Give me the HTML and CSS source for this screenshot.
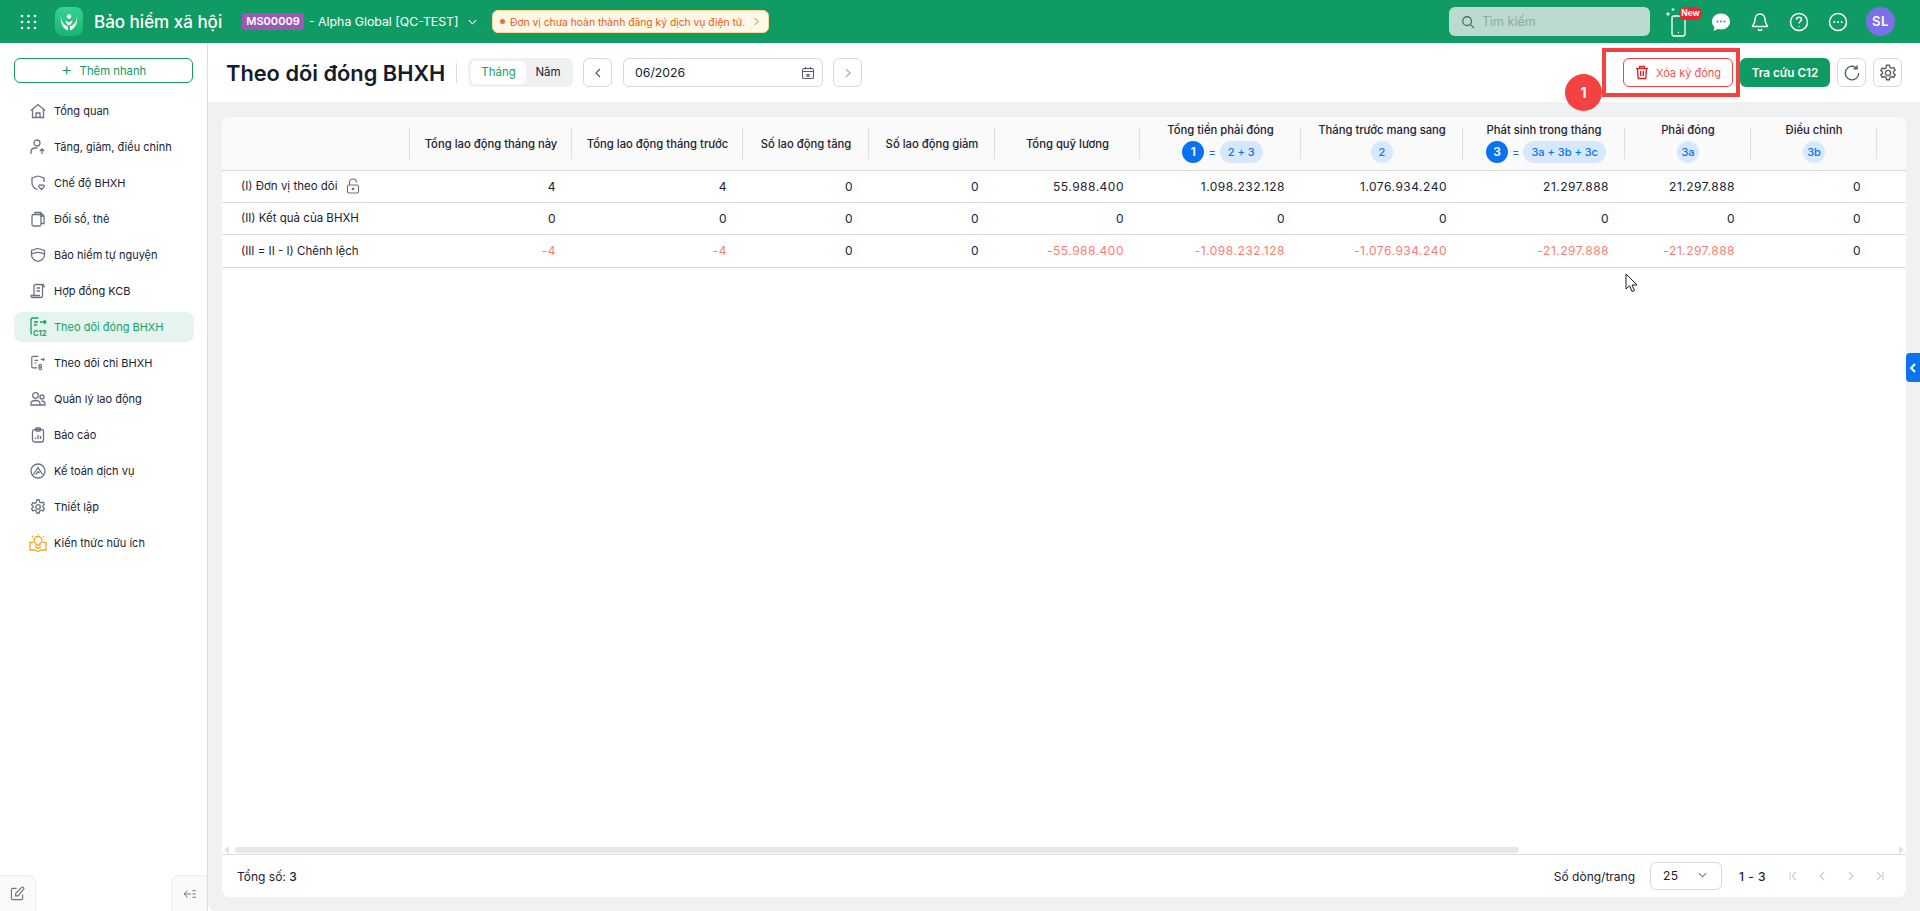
FILE: index.html
```html
<!DOCTYPE html>
<html lang="vi">
<head>
  <meta charset="UTF-8" />
  <meta name="viewport" content="width=device-width, initial-scale=1.0"/>
  <title>Theo dõi đóng BHXH</title>
  <link rel="stylesheet" href="styles.css">
</head>
<body>

  <header class="topbar">
    <svg class="apps-icon" viewBox="0 0 17 16" fill="#fff"><circle cx="2" cy="2" r="1.3"/><circle cx="8.5" cy="2" r="1.3"/><circle cx="15" cy="2" r="1.3"/><circle cx="2" cy="8" r="1.3"/><circle cx="8.5" cy="8" r="1.3"/><circle cx="15" cy="8" r="1.3"/><circle cx="2" cy="14" r="1.3"/><circle cx="8.5" cy="14" r="1.3"/><circle cx="15" cy="14" r="1.3"/></svg>
    <div class="logo">
      <svg viewBox="0 0 20 20" fill="#fff"><circle cx="10" cy="4.500" r="2.300"/><path d="M2 3.500c0 6 3 9.500 7 11v4C4 17 1 11 2 3.500zM18 3.500c0 6-3 9.500-7 11v4c5-1.500 8-7.500 7-15z"/><path d="M6.500 7.500c1 2 2.300 2.700 3.500 2.700s2.500-.7 3.500-2.700c0 3.500-1.700 5.300-3.500 6-1.800-.7-3.500-2.500-3.500-6z"/></svg>
    </div>
    <div class="app-name">Bảo hiểm xã hội</div>
    <span class="org-code">MS00009</span>
    <span class="org-name">- Alpha Global [QC-TEST]</span>
    <svg class="org-caret" viewBox="0 0 10 6" fill="none" stroke="#fff" stroke-width="1.200"><path d="M1 1l4 4 4-4"/></svg>
    <div class="notice">
      <span class="notice-dot"></span>
      <span>Đơn vị chưa hoàn thành đăng ký dịch vụ điện tử.</span>
      <svg viewBox="0 0 6 10" fill="none" stroke="#e0641a" stroke-width="1.200"><path d="M1 1l4 4-4 4"/></svg>
    </div>

    <div class="top-right">
      <div class="search">
        <svg viewBox="0 0 16 16" fill="none" stroke="#4d6b60" stroke-width="1.500"><circle cx="7" cy="7" r="5"/><path d="M11 11l4 4"/></svg>
        <span>Tìm kiếm</span>
      </div>
      <div class="phone">
        <svg viewBox="0 0 24 30" fill="none" stroke="#fff" stroke-width="1.300"><rect x="8" y="9" width="13" height="20" rx="2"/><path d="M14 25.500h1"/><path d="M4 5v4M2 7h4M9 1v3M7.500 2.500h3" stroke-width="1"/></svg>
        <span class="new-badge">New</span>
      </div>
      <svg class="top-icon" viewBox="0 0 20 20"><path fill="#fff" d="M10 1.500c5 0 9 3.500 9 8s-4 8-9 8c-1 0-2-.1-3-.4L2.500 19l1-3.700C2 13.800 1 11.800 1 9.500c0-4.500 4-8 9-8z"/><g fill="#3d6ff0"><circle cx="6.500" cy="9.500" r="1"/><circle cx="10" cy="9.500" r="1"/><circle cx="13.500" cy="9.500" r="1"/></g></svg>
      <svg class="top-icon" viewBox="0 0 20 20" fill="none" stroke="#fff" stroke-width="1.500"><path d="M10 2c-3.200 0-5 2.500-5 5.500 0 4-2.500 6-2.500 7h15c0-1-2.500-3-2.500-7C15 4.500 13.200 2 10 2z"/><path d="M8 17c.4 1 1.100 1.500 2 1.500s1.600-.5 2-1.500"/></svg>
      <svg class="top-icon" viewBox="0 0 20 20" fill="none" stroke="#fff" stroke-width="1.500"><circle cx="10" cy="10" r="8.500"/><path d="M7.500 7.800c0-1.500 1.100-2.500 2.500-2.500s2.500 1 2.500 2.300c0 1.900-2.500 2-2.500 4"/><path d="M10 14v.8"/></svg>
      <svg class="top-icon" viewBox="0 0 20 20" fill="none" stroke="#fff" stroke-width="1.500"><circle cx="10" cy="10" r="8.500"/><g fill="#fff" stroke="none"><circle cx="6.300" cy="10" r="1"/><circle cx="10" cy="10" r="1"/><circle cx="13.700" cy="10" r="1"/></g></svg>
      <div class="avatar">SL</div>
    </div>
  </header>

  <div class="layout">
    <aside class="sidebar">
      <button class="quick-add"><span class="plus">+</span> Thêm nhanh</button>
      <nav class="menu">
        <a class="menu-item">
          <svg viewBox="0 0 16 16"><path d="M1 7.500L8 1.500l7 6M2.500 6.500v8h11v-8M6 14.500V10h4v4.500"/></svg>
          Tổng quan
        </a>
        <a class="menu-item">
          <svg viewBox="0 0 16 16"><circle cx="7" cy="4" r="3"/><path d="M1 15v-2c0-2.500 2-4 4.500-4h2M12 15v-5M9.800 12L12 9.800 14.200 12"/></svg>
          Tăng, giảm, điều chỉnh
        </a>
        <a class="menu-item">
          <svg viewBox="0 0 16 16"><path d="M8 1l6 2v4M8 1L2 3v5c0 3 2.500 5.500 5.500 6.500"/><path d="M11.500 14.500l-2.600-2.600c-1-1.300.9-2.800 2.600-1.300 1.700-1.500 3.600 0 2.600 1.300z"/></svg>
          Chế độ BHXH
        </a>
        <a class="menu-item">
          <svg viewBox="0 0 16 16"><path d="M5 3V1.500h5.500l3.500 3.500v7.500h-3M10.500 1.500V5H14"/><rect x="2" y="3.500" width="9" height="11.500" rx="1.500"/></svg>
          Đối sổ, thẻ
        </a>
        <a class="menu-item">
          <svg viewBox="0 0 16 16"><path d="M8 1.500l6.500 2v4c0 3.500-3 6-6.500 7-3.500-1-6.500-3.500-6.500-7v-4z"/><path d="M1.500 7c4-2 9-2 13 0"/></svg>
          Bảo hiểm tự nguyện
        </a>
        <a class="menu-item">
          <svg viewBox="0 0 16 16"><path d="M4 12.500V3c0-1 .7-1.500 1.500-1.500h7c.8 0 1.500.5 1.500 1.500v1.500M12.500 1.500V12.500c0 1.500-.8 2-1.700 2H2.500C1.500 14.500 1 13.500 1 12.500h9"/><path d="M6.500 5h3.500M6.500 8h3.500"/></svg>
          Hợp đồng KCB
        </a>
        <a class="menu-item active">
          <svg viewBox="0 0 19 20"><path d="M9.500 1h-6C2.500 1 2 1.500 2 2.500v13c0 1 .5 1.500 1 1.500M5 5h4M5 8h3M11 5h6M15 3l2 2-2 2"/><text x="4" y="18.500" class="icon-c12">C12</text></svg>
          Theo dõi đóng BHXH
        </a>
        <a class="menu-item">
          <svg viewBox="0 0 18 18"><path d="M9.500 1.500h-6C2.500 1.500 2 2 2 3v10c0 1 .5 1.500 1.500 1.500H8M5 6h4M5 9h2.500M12 5h4M14.500 3.500L16 5l-1.500 1.500"/><circle cx="11.500" cy="12" r="1.500"/><circle cx="11.500" cy="15" r="1.500"/></svg>
          Theo dõi chi BHXH
        </a>
        <a class="menu-item">
          <svg viewBox="0 0 16 16"><circle cx="5.500" cy="4.500" r="2.800"/><circle cx="12" cy="6" r="2"/><path d="M1 14v-1.500C1 10.500 2.800 9.500 5.500 9.500s4.500 1 4.500 3V14zM11.500 10c2 0 3.500 1 3.500 2.500V14h-5"/></svg>
          Quản lý lao động
        </a>
        <a class="menu-item">
          <svg viewBox="0 0 16 16"><rect x="2.500" y="2.500" width="11" height="12.500" rx="2"/><rect x="5.500" y="1" width="5" height="3" rx="1"/><path d="M5.500 12v-1.500M8 12V8M10.500 12v-3"/></svg>
          Báo cáo
        </a>
        <a class="menu-item">
          <svg viewBox="0 0 16 16"><circle cx="8" cy="8" r="7"/><path d="M3.500 11.500L8 4.500l4.500 7M6 11.500l2.200-3 1.300 1.500"/></svg>
          Kế toán dịch vụ
        </a>
        <a class="menu-item">
          <svg viewBox="0 0 16 16"><circle cx="8" cy="8" r="2.300"/><path d="M6.700 1h2.600l.4 2 1.500.8 1.900-.7 1.300 2.300-1.500 1.300v1.600l1.500 1.300-1.300 2.300-1.900-.7-1.500.8-.4 2H6.700l-.4-2-1.500-.8-1.900.7-1.300-2.300 1.500-1.300V7.200L1.600 5.900l1.300-2.300 1.900.7 1.500-.8z"/></svg>
          Thiết lập
        </a>
        <a class="menu-item tips">
          <svg viewBox="0 0 18 18"><path d="M4 8.500H1V16h5l3 1.500 3-1.500h5V8.500h-3M6 13c1 0 2 .5 3 1.500 1-1 2-1.500 3-1.500"/><path d="M7 11V9.500C5.500 8.500 5 7.500 5 6.500a4 4 0 0 1 8 0c0 1-.5 2-2 3V11z"/><path d="M9 0v1M3 2l1 1M15 2l-1 1"/></svg>
          Kiến thức hữu ích
        </a>
      </nav>
      <div class="side-bottom">
        <button class="side-btn edit-btn">
          <svg viewBox="0 0 16 16"><path d="M7 2.500H3c-1 0-1.500.5-1.500 1.500v9c0 1 .5 1.500 1.500 1.500h9c1 0 1.500-.5 1.500-1.500V9"/><path d="M6 10.500V8l6.500-6.500c.5-.5 1-.5 1.500 0l.5.5c.5.5.5 1 0 1.500L8.500 10.500z"/></svg>
        </button>
        <button class="side-btn collapse-btn">
          <svg viewBox="0 0 16 12"><path d="M5 2L1 6l4 4M1 6h8M11 2h4M11 6h4M11 10h4"/></svg>
        </button>
      </div>
    </aside>

    <main class="main">
      <div class="toolbar">
        <h1>Theo dõi đóng BHXH</h1>
        <span class="title-sep"></span>
        <div class="segment">
          <span class="seg-item on">Tháng</span>
          <span class="seg-item">Năm</span>
        </div>
        <button class="icon-btn">
          <svg viewBox="0 0 8 12" class="chev"><path d="M6 2L2 6l4 4"/></svg>
        </button>
        <div class="date-input">
          <span>06/2026</span>
          <svg viewBox="0 0 14 14"><rect x="1.500" y="2.500" width="11" height="10" rx="1.500"/><path d="M1.500 5.500h11M4.500 1v2.500M9.500 1v2.500M6 8.500h2v2H6z"/></svg>
        </div>
        <button class="icon-btn muted">
          <svg viewBox="0 0 8 12" class="chev"><path d="M2 2l4 4-4 4"/></svg>
        </button>

        <div class="toolbar-right">
          <button class="btn-danger">
            <svg viewBox="0 0 14 15"><path d="M1 3.500h12M4.700 3.500V1.500h4.600v2M2.500 3.500l.7 10h7.600l.7-10M5.700 6v5M8.300 6v5"/></svg>
            Xóa kỳ đóng
          </button>
          <button class="btn-primary">Tra cứu C12</button>
          <button class="icon-btn">
            <svg viewBox="0 0 16 16" class="tool-icon"><path d="M14 8A6 6 0 1 1 11.800 3.400M12.500 1v3.200H9.300"/></svg>
          </button>
          <button class="icon-btn">
            <svg viewBox="0 0 16 16" class="tool-icon"><circle cx="8" cy="8" r="2.300"/><path d="M6.700 1h2.600l.4 2 1.500.8 1.900-.7 1.300 2.300-1.500 1.300v1.600l1.500 1.300-1.300 2.300-1.900-.7-1.500.8-.4 2H6.700l-.4-2-1.500-.8-1.900.7-1.300-2.300 1.500-1.300V7.200L1.600 5.900l1.300-2.300 1.900.7 1.500-.8z"/></svg>
          </button>
        </div>
      </div>

      <div class="content">
        <div class="card">
          <div class="table-wrap">
            <table class="grid">
              <colgroup>
                <col class="c-label"><col class="c-162"><col class="c-171"><col class="c-126"><col class="c-126"><col class="c-145"><col class="c-161"><col class="c-162"><col class="c-162"><col class="c-126"><col class="c-126"><col class="c-rest">
              </colgroup>
              <thead>
                <tr>
                  <th></th>
                  <th>Tổng lao động tháng này</th>
                  <th>Tổng lao động tháng trước</th>
                  <th>Số lao động tăng</th>
                  <th>Số lao động giảm</th>
                  <th>Tổng quỹ lương</th>
                  <th>
                    <div class="th-title">Tổng tiền phải đóng</div>
                    <div class="formula wide"><span class="dot">1</span><span class="eq">=</span><span class="pill">2 + 3</span></div>
                  </th>
                  <th>
                    <div class="th-title">Tháng trước mang sang</div>
                    <div class="formula"><span class="pill round">2</span></div>
                  </th>
                  <th>
                    <div class="th-title">Phát sinh trong tháng</div>
                    <div class="formula wide"><span class="dot">3</span><span class="eq">=</span><span class="pill">3a + 3b + 3c</span></div>
                  </th>
                  <th>
                    <div class="th-title">Phải đóng</div>
                    <div class="formula"><span class="pill round">3a</span></div>
                  </th>
                  <th>
                    <div class="th-title">Điều chỉnh</div>
                    <div class="formula"><span class="pill round">3b</span></div>
                  </th>
                  <th class="no-sep"></th>
                </tr>
              </thead>
              <tbody>
                <tr>
                  <td class="label">
                    <span class="label-inner">(I) Đơn vị theo dõi
                      <svg class="lock" viewBox="0 0 14 16"><path d="M3.500 7V4.500C3.500 2.500 5 1 7 1s3.500 1.500 3.500 3.500"/><rect x="1.500" y="7" width="11" height="8" rx="1.500"/><circle cx="7" cy="11" r=".8"/></svg>
                    </span>
                  </td>
                  <td>4</td><td>4</td><td>0</td><td>0</td><td>55.988.400</td><td>1.098.232.128</td><td>1.076.934.240</td><td>21.297.888</td><td>21.297.888</td><td>0</td><td></td>
                </tr>
                <tr>
                  <td class="label">(II) Kết quả của BHXH</td>
                  <td>0</td><td>0</td><td>0</td><td>0</td><td>0</td><td>0</td><td>0</td><td>0</td><td>0</td><td>0</td><td></td>
                </tr>
                <tr class="last">
                  <td class="label">(III = II - I) Chênh lệch</td>
                  <td class="neg">-4</td><td class="neg">-4</td><td>0</td><td>0</td><td class="neg">-55.988.400</td><td class="neg">-1.098.232.128</td><td class="neg">-1.076.934.240</td><td class="neg">-21.297.888</td><td class="neg">-21.297.888</td><td>0</td><td></td>
                </tr>
              </tbody>
            </table>
          </div>

          <div class="hscroll">
            <span class="arrow-l"></span>
            <div class="track"><div class="thumb"></div></div>
            <span class="arrow-r"></span>
          </div>

          <div class="pager">
            <div class="total">Tổng số: <b>3</b></div>
            <div class="pager-right">
              <span class="page-size-label">Số dòng/trang</span>
              <div class="page-size">
                <span>25</span>
                <svg viewBox="0 0 10 6"><path d="M1 1l4 4 4-4"/></svg>
              </div>
              <span class="range">1 - 3</span>
              <div class="page-nav">
                <svg viewBox="0 0 10 12"><path d="M2 2v8M8 2L4 6l4 4"/></svg>
                <svg viewBox="0 0 10 12"><path d="M7 2L3 6l4 4"/></svg>
                <svg viewBox="0 0 10 12"><path d="M3 2l4 4-4 4"/></svg>
                <svg viewBox="0 0 10 12"><path d="M2 2l4 4-4 4M8 2v8"/></svg>
              </div>
            </div>
          </div>
        </div>
      </div>
    </main>
  </div>

  <!-- annotation overlays from the screenshot -->
  <div class="mark-box"></div>
  <div class="mark-num">1</div>
  <div class="drawer-tab">
    <svg viewBox="0 0 8 12"><path d="M6 2L2 6l4 4"/></svg>
  </div>
  <svg class="cursor" viewBox="0 0 13 20"><path d="M1 1v15l3.600-3.300L7 18.500l2.500-1-2.400-5.500h5z" fill="#fff" stroke="#1a1a1a" stroke-width="1"/></svg>

</body>
</html>
```

FILE: styles.css
```css
:root {
  --green: #0f9b63;
  --text: #1a2233;
  --icon: #6b7280;
  --line: #d9dadc;
  --bg: #f0f1f3;
  --blue: #0a73ee;
  --blue-soft: #d5e8fc;
  --red: #f44141;
  --neg: #fa7d75;
}

* {
  box-sizing: border-box;
  margin: 0;
  padding: 0;
}

html, body {
  height: 100%;
}

body {
  font-family: Inter, "Noto Sans", sans-serif;
  font-size: 12px;
  color: var(--text);
  background: #fff;
  display: flex;
  flex-direction: column;
  overflow: hidden;
  position: relative;
}

button {
  font-family: inherit;
  cursor: pointer;
}

/* top bar */
.topbar {
  height: 43px;
  flex: none;
  background: var(--green);
  color: #fff;
  display: flex;
  align-items: center;
  padding-left: 20px;
}

.apps-icon {
  width: 17px;
  height: 16px;
}

.logo {
  width: 28px;
  height: 29px;
  margin-left: 18px;
  border-radius: 8px;
  background: linear-gradient(180deg, #35d48f, #1bb377);
  display: flex;
  align-items: center;
  justify-content: center;
}

.logo svg {
  width: 20px;
  height: 20px;
}

.app-name {
  margin-left: 11px;
  font-size: 17px;
  font-weight: 500;
  white-space: nowrap;
  width: 148px;
}

.org-code {
  width: 62px;
  height: 17px;
  line-height: 17px;
  text-align: center;
  border-radius: 3px;
  background: #9b59b6;
  font-size: 11px;
  font-weight: 600;
}

.org-name {
  margin-left: 5px;
  font-size: 12.300px;
  white-space: nowrap;
  width: 157px;
}

.org-caret {
  width: 9px;
  height: 6px;
  margin-left: 2px;
}

.notice {
  margin-left: 15px;
  width: 277px;
  height: 23px;
  background: #fff8e8;
  border: 1px solid #ffd98c;
  border-radius: 6px;
  display: flex;
  align-items: center;
  padding-left: 7px;
  color: #df5f14;
  font-size: 10.300px;
  white-space: nowrap;
}

.notice-dot {
  width: 5px;
  height: 5px;
  border-radius: 50%;
  background: #e8731a;
  margin-right: 5px;
}

.notice svg {
  width: 5px;
  height: 9px;
  margin-left: 9px;
}

.top-right {
  margin-left: auto;
  display: flex;
  align-items: center;
  padding-right: 25px;
}

.search {
  width: 201px;
  height: 29px;
  border-radius: 6px;
  background: #bcdacf;
  display: flex;
  align-items: center;
  padding-left: 12px;
  gap: 7px;
  color: #8fa89e;
  font-size: 12.500px;
}

.search svg {
  width: 14px;
  height: 14px;
}

.phone {
  position: relative;
  width: 24px;
  height: 30px;
  margin-left: 14px;
  margin-right: 23px;
}

.phone svg {
  width: 24px;
  height: 30px;
}

.new-badge {
  position: absolute;
  left: 15px;
  top: 0;
  width: 23px;
  height: 13px;
  line-height: 13px;
  border-radius: 7px;
  background: #f5222d;
  font-size: 8.500px;
  font-weight: 700;
  text-align: center;
}

.top-icon {
  width: 20px;
  height: 20px;
  margin-left: 19px;
}

.phone + .top-icon {
  margin-left: 0;
}

.avatar {
  width: 29px;
  height: 29px;
  margin-left: 18px;
  border-radius: 50%;
  background: #7c70ea;
  font-size: 13px;
  font-weight: 600;
  letter-spacing: .5px;
  line-height: 29px;
  text-align: center;
}

/* page layout */
.layout {
  flex: 1;
  display: flex;
  min-height: 0;
}

.sidebar {
  width: 208px;
  flex: none;
  border-right: 1px solid #dcdde0;
  display: flex;
  flex-direction: column;
  padding-top: 15px;
}

.quick-add {
  width: 179px;
  height: 25px;
  margin-left: 14px;
  padding-bottom: 2px;
  border: 1px solid var(--green);
  border-radius: 6px;
  background: #fff;
  color: var(--green);
  font-size: 11.300px;
  flex: none;
}

.plus {
  font-size: 18px;
  font-weight: 300;
  margin-right: 4px;
  line-height: 1;
  vertical-align: -1px;
}

.menu {
  display: flex;
  flex-direction: column;
  margin-top: 10px;
}

.menu-item {
  height: 36px;
  display: flex;
  align-items: center;
  gap: 8px;
  margin: 0 13px 0 14px;
  padding: 0 0 1px 16px;
  border-radius: 8px;
  font-size: 11px;
  white-space: nowrap;
}

.menu-item svg {
  width: 16px;
  height: 16px;
  fill: none;
  stroke: var(--icon);
  stroke-width: 1.300;
}

.menu-item.active {
  height: 30px;
  margin-top: 3px;
  margin-bottom: 3px;
  background: #e6f4ee;
  color: #14a06a;
}

.menu-item.active svg {
  stroke: #14a06a;
  width: 19px;
  height: 20px;
  margin-left: -1px;
  margin-right: -2px;
}

.icon-c12 {
  font-size: 7.500px;
  font-weight: 700;
  fill: #14a06a;
  stroke: none;
}

.menu-item.tips svg {
  stroke: #f5a623;
  width: 18px;
  height: 18px;
  margin-left: -1px;
  margin-right: -1px;
}

.side-bottom {
  margin-top: auto;
  display: flex;
  justify-content: space-between;
  height: 36px;
}

.side-btn {
  width: 36px;
  height: 36px;
  border: 1px solid #eceef0;
  border-bottom: 0;
  background: #fafafa;
  display: flex;
  align-items: center;
  justify-content: center;
}

.side-btn svg {
  fill: none;
  stroke: var(--icon);
  stroke-width: 1.200;
}

.edit-btn {
  border-left: 0;
  border-radius: 0 8px 0 0;
}

.edit-btn svg {
  width: 15px;
  height: 15px;
}

.collapse-btn {
  border-right: 0;
  border-radius: 8px 0 0 0;
}

.collapse-btn svg {
  width: 14px;
  height: 10px;
}

.main {
  flex: 1;
  min-width: 0;
  display: flex;
  flex-direction: column;
}

.toolbar {
  height: 59px;
  flex: none;
  display: flex;
  align-items: center;
  padding: 0 18px 0 18px;
}

h1 {
  font-size: 21.800px;
  font-weight: 600;
  color: #151c2b;
  white-space: nowrap;
  width: 219px;
}

.title-sep {
  width: 1px;
  height: 20px;
  background: var(--line);
  margin: 0 11px;
}

.segment {
  width: 105px;
  height: 29px;
  padding: 3px 3px;
  background: var(--bg);
  border-radius: 6px;
  display: flex;
  align-items: center;
}

.seg-item {
  flex: 1;
  height: 23px;
  line-height: 23px;
  text-align: center;
  border-radius: 5px;
  font-size: 11.500px;
}

.seg-item.on {
  flex: none;
  width: 55px;
  background: #fff;
  color: #14a06a;
}

.icon-btn {
  width: 29px;
  height: 29px;
  flex: none;
  border: 1px solid #d7d9dc;
  border-radius: 6px;
  background: #fff;
  display: flex;
  align-items: center;
  justify-content: center;
  margin-left: 10px;
}

.chev {
  width: 8px;
  height: 12px;
  fill: none;
  stroke: #555c66;
  stroke-width: 1.200;
}

.muted .chev {
  stroke: #a9adb3;
}

.date-input {
  width: 200px;
  height: 29px;
  margin-left: 11px;
  border: 1px solid #d7d9dc;
  border-radius: 6px;
  display: flex;
  align-items: center;
  justify-content: space-between;
  padding: 0 7px 0 11px;
  font-size: 12.300px;
}

.date-input svg {
  width: 14px;
  height: 14px;
  fill: none;
  stroke: #555c66;
  stroke-width: 1.100;
}

.toolbar-right {
  margin-left: auto;
  display: flex;
  align-items: center;
}

.toolbar-right .icon-btn {
  margin-left: 7px;
}

.btn-danger {
  width: 110px;
  height: 29px;
  border: 1px solid var(--red);
  border-radius: 6px;
  background: #fff;
  color: #f0534f;
  font-size: 11px;
  display: flex;
  align-items: center;
  justify-content: center;
  gap: 7px;
}

.btn-danger svg {
  width: 14px;
  height: 15px;
  fill: none;
  stroke: #d9252a;
  stroke-width: 1.400;
}

.btn-primary {
  width: 90px;
  height: 29px;
  margin-left: 7px;
  border: 0;
  border-radius: 6px;
  background: var(--green);
  color: #fff;
  font-size: 11.700px;
  font-weight: 600;
}

.tool-icon {
  width: 18px;
  height: 18px;
  fill: none;
  stroke: #555c66;
  stroke-width: 1.200;
}

/* table card */
.content {
  flex: 1;
  min-height: 0;
  background: var(--bg);
  padding: 15px 14px 14px 14px;
  display: flex;
  border-bottom-left-radius: 8px;
}

.card {
  flex: 1;
  min-width: 0;
  background: #fff;
  border-radius: 8px;
  overflow: hidden;
  display: flex;
  flex-direction: column;
}

.table-wrap {
  flex: 1;
  min-height: 0;
  overflow: hidden;
}

.grid {
  table-layout: fixed;
  border-collapse: separate;
  border-spacing: 0;
  width: 1684px;
}

.c-label { width: 188px; }
.c-162 { width: 162px; }
.c-171 { width: 171px; }
.c-126 { width: 126px; }
.c-145 { width: 145px; }
.c-161 { width: 161px; }
.c-rest { width: 29px; }

th {
  height: 54px;
  background: #fafafa;
  border-bottom: 1px solid var(--line);
  font-size: 11.250px;
  font-weight: 500;
  text-align: center;
  position: relative;
  white-space: nowrap;
  padding: 0;
}

th::after {
  content: "";
  position: absolute;
  right: 0;
  top: 10px;
  height: 32px;
  width: 1px;
  background: #dcdde0;
}

th.no-sep::after {
  display: none;
}

.th-title {
  line-height: 14px;
  margin-top: -2px;
}

.formula {
  display: flex;
  align-items: center;
  justify-content: center;
  margin-top: 4px;
  color: var(--blue);
}

.formula.wide {
  padding-left: 4px;
}

.dot {
  width: 22px;
  height: 22px;
  border-radius: 50%;
  background: var(--blue);
  color: #fff;
  font-size: 12px;
  font-weight: 600;
  line-height: 22px;
}

.eq {
  margin: 0 4px;
  font-size: 11px;
}

.pill {
  height: 22px;
  line-height: 22px;
  padding: 0 8px;
  border-radius: 11px;
  background: var(--blue-soft);
  font-size: 11px;
}

.pill.round {
  padding: 0;
  min-width: 22px;
  width: 22px;
}

td {
  height: 32px;
  padding: 0 16px 1px 0;
  text-align: right;
  font-size: 12px;
  letter-spacing: .5px;
  border-bottom: 1px solid var(--line);
  white-space: nowrap;
}

.last td {
  height: 33px;
}

td.label {
  padding: 0 0 1px 19px;
  text-align: left;
  font-size: 11.500px;
  letter-spacing: 0;
}

.label-inner {
  display: flex;
  align-items: center;
  gap: 8px;
}

.lock {
  width: 14px;
  height: 16px;
  margin-top: -1px;
  fill: none;
  stroke: #6b6f75;
  stroke-width: 1.100;
}

td.neg {
  color: var(--neg);
}

.hscroll {
  height: 9px;
  flex: none;
  display: flex;
  align-items: center;
  padding: 0 2px;
}

.track {
  flex: 1;
  height: 6px;
  margin: 0 4px 0 6px;
}

.thumb {
  width: 1284px;
  height: 6px;
  border-radius: 3px;
  background: #e6e7e9;
}

.arrow-l, .arrow-r {
  width: 0;
  height: 0;
  border-top: 4px solid transparent;
  border-bottom: 4px solid transparent;
}

.arrow-l {
  border-right: 5px solid #e2e3e5;
}

.arrow-r {
  border-left: 5px solid #e2e3e5;
}

.pager {
  height: 43px;
  flex: none;
  border-top: 1px solid var(--line);
  display: flex;
  align-items: center;
  justify-content: space-between;
  padding: 0 21px 0 15px;
}

.total b {
  font-weight: 500;
}

.pager-right {
  display: flex;
  align-items: center;
}

.page-size {
  width: 72px;
  height: 28px;
  margin-left: 15px;
  border: 1px solid #d7d9dc;
  border-radius: 6px;
  display: flex;
  align-items: center;
  justify-content: space-between;
  padding: 0 14px 2px 12px;
  letter-spacing: .5px;
}

.page-size svg {
  width: 9px;
  height: 6px;
  fill: none;
  stroke: #70757c;
  stroke-width: 1.200;
}

.range {
  margin-left: 17px;
  font-weight: 500;
  letter-spacing: .5px;
}

.page-nav {
  display: flex;
  align-items: center;
  gap: 19px;
  margin-left: 22px;
}

.page-nav svg {
  width: 10px;
  height: 12px;
  fill: none;
  stroke: #c9ccd0;
  stroke-width: 1.100;
}

/* things lying over the page */
.mark-box {
  position: absolute;
  left: 1602px;
  top: 48px;
  width: 138px;
  height: 49px;
  border: 4px solid var(--red);
}

.mark-num {
  position: absolute;
  left: 1565px;
  top: 74px;
  width: 37px;
  height: 37px;
  border-radius: 50%;
  background: var(--red);
  color: #fff;
  font-size: 14px;
  font-weight: 700;
  line-height: 37px;
  text-align: center;
}

.drawer-tab {
  position: absolute;
  left: 1906px;
  top: 353px;
  width: 14px;
  height: 29px;
  background: var(--blue);
  border-radius: 4px 0 0 4px;
  display: flex;
  align-items: center;
  justify-content: center;
}

.drawer-tab svg {
  width: 8px;
  height: 12px;
  fill: none;
  stroke: #fff;
  stroke-width: 2;
}

.cursor {
  position: absolute;
  left: 1625px;
  top: 273px;
  width: 13px;
  height: 20px;
}
```
